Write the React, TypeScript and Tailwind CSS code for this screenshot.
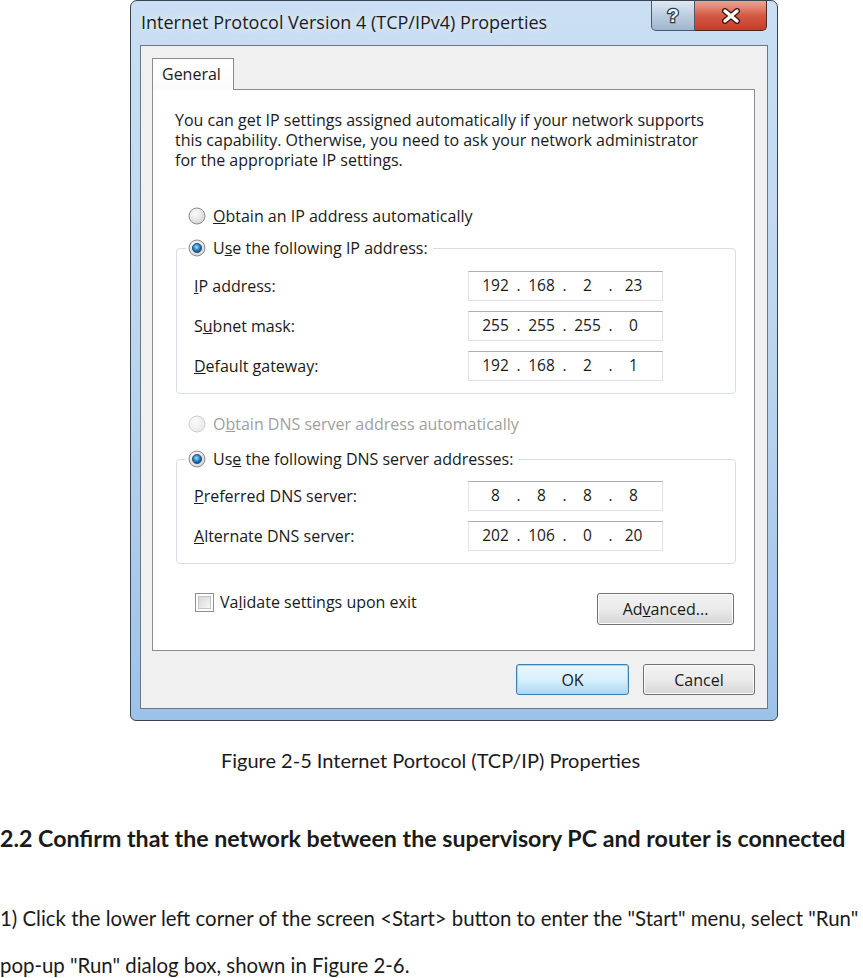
import React from 'react'

const dlgFont = { fontFamily: '"Open Sans", "Noto Sans", sans-serif' }
const docFont = { fontFamily: 'Lato, "Liberation Sans", sans-serif' }

function Radio({ checked = false, disabled = false }: { checked?: boolean; disabled?: boolean }) {
    const id = React.useId().replace(/:/g, '')
    return (
        <svg width="18" height="18" viewBox="0 0 18 18" className="shrink-0">
            <defs>
                <radialGradient id={`f${id}`} cx="40%" cy="35%" r="75%">
                    <stop offset="0" stopColor={disabled ? '#fbfbfb' : '#ffffff'} />
                    <stop offset="1" stopColor={disabled ? '#e6e6e6' : '#cfcfcf'} />
                </radialGradient>
                <radialGradient id={`d${id}`} cx="45%" cy="40%" r="65%">
                    <stop offset="0" stopColor="#a6e4ff" />
                    <stop offset="0.45" stopColor="#2d8fd4" />
                    <stop offset="1" stopColor="#0b3a63" />
                </radialGradient>
            </defs>
            <circle cx="9" cy="9" r="8" fill={`url(#f${id})`} stroke={disabled ? '#cfcfcf' : '#8a8c8e'} strokeWidth="1" />
            {checked && <circle cx="9" cy="9" r="4.6" fill={`url(#d${id})`} stroke="#21405c" strokeWidth="0.8" />}
        </svg>
    )
}

function IpBox({ parts }: { parts: string[] }) {
    return (
        <div className="w-[195px] h-[30px] bg-white border border-[#dfe3e8] border-t-[#abadb3] flex items-center pl-[9px] text-[15.5px] text-[#1a1a1a]">
            {parts.map((p, i) => (
                <React.Fragment key={i}>
                    {i > 0 && <span className="w-[11px] text-center">.</span>}
                    <span className="w-[35px] text-center">{p}</span>
                </React.Fragment>
            ))}
        </div>
    )
}

function Row({ label, parts }: { label: React.ReactNode; parts: string[] }) {
    return (
        <div className="flex items-center h-[30px]">
            <span className="w-[274px]">{label}</span>
            <IpBox parts={parts} />
        </div>
    )
}

function Button({ children, primary = false, className = '' }: { children: React.ReactNode; primary?: boolean; className?: string }) {
    return (
        <div
            className={
                'h-[31px] rounded-[3px] border flex items-center justify-center text-[16px] text-[#1a1a1a] ' +
                (primary
                    ? 'border-[#3c7fb1] bg-gradient-to-b from-[#eaf6fd] via-[#d9f0fc] to-[#a7d9f5] shadow-[inset_0_0_0_1px_#a9d8f3] '
                    : 'border-[#707070] bg-gradient-to-b from-[#f2f2f2] via-[#ebebeb] to-[#d6d6d6] shadow-[inset_0_0_0_1px_#fcfcfc] ') +
                className
            }
        >
            {children}
        </div>
    )
}

export default function App() {
    return (
        <div className="w-[863px] h-[978px] bg-white overflow-hidden text-black">
            {/* dialog window */}
            <div className="ml-[130px] w-[648px] h-[721px] rounded-t-[7px] rounded-b-[6px] border border-[#38444f] bg-gradient-to-b from-[#cadff3] via-[#bcd5ee] to-[#9dc2e9] flex flex-col px-[9px] pb-[11px]" style={dlgFont}>
                <div className="h-[44px] flex items-start justify-between">
                    <span className="pl-[1px] pt-[8px] text-[18px] text-[#1c1c1c] [text-shadow:0_0_8px_#ffffff]">Internet Protocol Version 4 (TCP/IPv4) Properties</span>
                    <div className="flex mr-[1px] h-[30px]">
                        <div className="w-[44px] h-[30px] rounded-bl-[5px] border border-t-0 border-[#4b5b6c] bg-gradient-to-b from-[#dfe9f3] via-[#bccde0] to-[#9fb6cf] flex items-center justify-center">
                            <span className="text-[19px] font-bold text-[#f4f6f8] leading-none [-webkit-text-stroke:2.5px_#2a3a4c] [paint-order:stroke_fill]" style={{ fontFamily: '"Liberation Sans", sans-serif' }}>?</span>
                        </div>
                        <div className="w-[72px] h-[30px] rounded-br-[5px] border border-t-0 border-l-0 border-[#4b2a25] bg-gradient-to-b from-[#e8a695] via-[#d45a45] to-[#c23d27] flex items-center justify-center">
                            <svg width="20" height="16" viewBox="0 0 20 16">
                                <path d="M4 3 L16 13 M16 3 L4 13" stroke="#3b1a14" strokeWidth="6" strokeLinecap="round" />
                                <path d="M4 3 L16 13 M16 3 L4 13" stroke="#ffffff" strokeWidth="3.4" strokeLinecap="round" />
                            </svg>
                        </div>
                    </div>
                </div>

                {/* client area */}
                <div className="flex-1 border border-[#6b7784] bg-[#f0f0f0] flex flex-col pt-[12px] pl-[11px] pr-[12px] text-[16px] text-[#1a1a1a]">
                    <div className="flex">
                        <div className="relative z-10 -mb-px w-[82px] h-[32px] border border-b-0 border-[#898c95] bg-gradient-to-b from-[#ffffff] to-[#fbfbfb] pl-[9px] pt-[3px]">General</div>
                    </div>
                    <div className="h-[562px] border border-[#898c95] bg-white pl-[22px] pr-[18px] pt-[20px] flex flex-col">
                        <p className="leading-[20px]">
                            You can get IP settings assigned automatically if your network supports
                            <br />
                            this capability. Otherwise, you need to ask your network administrator
                            <br />
                            for the appropriate IP settings.
                        </p>

                        <div className="mt-[36px] ml-[13px] h-[20px] flex items-center gap-[7px]">
                            <Radio />
                            <span><u>O</u>btain an IP address automatically</span>
                        </div>

                        <fieldset className="mt-[12px] ml-[1px] border border-[#d5dfe5] rounded-[4px] pl-[9px] pb-[12px]">
                            <legend className="px-[2px] h-[20px] flex items-center gap-[7px] pr-[5px]">
                                <Radio checked />
                                <span>U<u>s</u>e the following IP address:</span>
                            </legend>
                            <div className="pl-[8px] pt-[13px] flex flex-col gap-[10px]">
                                <Row label={<><u>I</u>P address:</>} parts={['192', '168', '2', '23']} />
                                <Row label={<>S<u>u</u>bnet mask:</>} parts={['255', '255', '255', '0']} />
                                <Row label={<><u>D</u>efault gateway:</>} parts={['192', '168', '2', '1']} />
                            </div>
                        </fieldset>

                        <div className="mt-[20px] ml-[13px] h-[20px] flex items-center gap-[7px] text-[#a0a0a0]">
                            <Radio disabled />
                            <span>O<u>b</u>tain DNS server address automatically</span>
                        </div>

                        <fieldset className="mt-[15px] ml-[1px] border border-[#d5dfe5] rounded-[4px] pl-[9px] pb-[12px]">
                            <legend className="px-[2px] h-[20px] flex items-center gap-[7px] pr-[5px]">
                                <Radio checked />
                                <span>Us<u>e</u> the following DNS server addresses:</span>
                            </legend>
                            <div className="pl-[8px] pt-[12px] flex flex-col gap-[10px]">
                                <Row label={<><u>P</u>referred DNS server:</>} parts={['8', '8', '8', '8']} />
                                <Row label={<><u>A</u>lternate DNS server:</>} parts={['202', '106', '0', '20']} />
                            </div>
                        </fieldset>

                        <div className="mt-[28px] flex items-start justify-between">
                            <div className="ml-[20px] h-[20px] flex items-center gap-[6px]">
                                <div className="w-[19px] h-[19px] border border-[#8e8f8f] bg-white p-[2px]">
                                    <div className="w-full h-full border border-[#c4c4c4] bg-gradient-to-br from-[#d8d8d8] to-[#f7f7f7]" />
                                </div>
                                <span>Va<u>l</u>idate settings upon exit</span>
                            </div>
                            <Button className="mt-[1px] mr-[2px] w-[137px] h-[32px]">
                                <span>Ad<u>v</u>anced...</span>
                            </Button>
                        </div>
                    </div>

                    <div className="mt-[13px] flex justify-end gap-[14px]">
                        <Button primary className="w-[113px]">OK</Button>
                        <Button className="w-[112px]">Cancel</Button>
                    </div>
                </div>
            </div>

            {/* document text */}
            <div style={docFont} className="text-[#1a1a1a]">
                <p className="mt-[26px] text-center text-[20px] leading-[26px] pr-[2px]">Figure 2-5 Internet Portocol (TCP/IP) Properties</p>
                <h2 className="mt-[50px] text-[23.2px] leading-[30px] font-bold whitespace-nowrap">2.2 Confirm that the network between the supervisory PC and router is connected</h2>
                <p className="mt-[52px] text-[20.4px] leading-[26px] whitespace-nowrap">1) Click the lower left corner of the screen &lt;Start&gt; button to enter the "Start" menu, select "Run"</p>
                <p className="mt-[21px] text-[20.4px] leading-[26px]">pop-up "Run" dialog box, shown in Figure 2-6.</p>
            </div>
        </div>
    )
}
